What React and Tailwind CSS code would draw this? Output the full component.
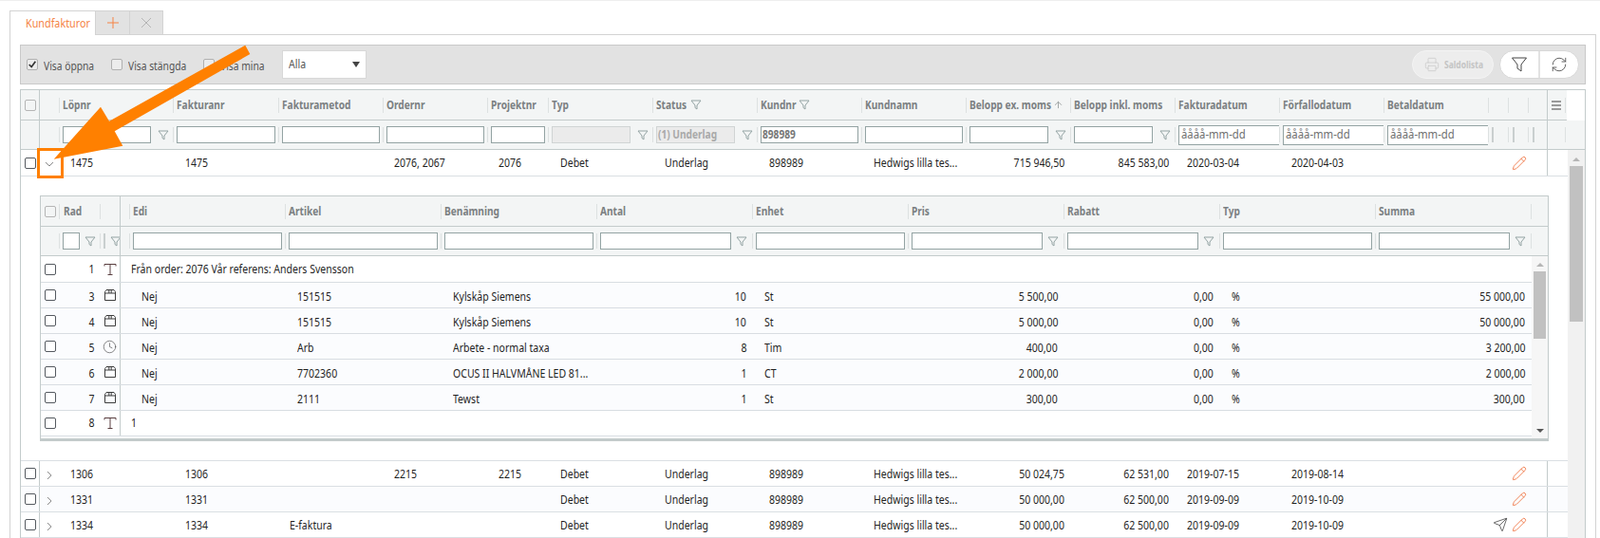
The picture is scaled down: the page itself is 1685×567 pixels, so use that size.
import { Clock, Pencil, Printer, RefreshCw, Send, ArrowUp } from "lucide-react";

const mainCols = [
  { label: "Löpnr", w: "w-[120px]", funnel: true, pad: "pl-[12px]" },
  { label: "Fakturanr", w: "w-[111px]", pad: "pl-[13px]" },
  { label: "Fakturametod", w: "w-[110px]", pad: "pl-[12px]" },
  { label: "Ordernr", w: "w-[110px]", pad: "pl-[12px]" },
  { label: "Projektnr", w: "w-[64px]", pad: "pl-[12px]" },
  { label: "Typ", w: "w-[110px]", funnel: true, disabled: true, pad: "pl-[13px]" },
  { label: "Status", w: "w-[110px]", funnel: true, disabled: true, value: "(1) Underlag", headFunnel: true, labelW: "w-[31px]", pad: "pl-[13px]" },
  { label: "Kundnr", w: "w-[110px]", value: "898989", headFunnel: true, labelW: "w-[35px]", pad: "pl-[13px]" },
  { label: "Kundnamn", w: "w-[110px]", pad: "pl-[13px]" },
  { label: "Belopp ex. moms", w: "w-[110px]", funnel: true, sort: true, labelW: "w-[83px]", right: true },
  { label: "Belopp inkl. moms", w: "w-[110px]", funnel: true, right: true },
  { label: "Fakturadatum", w: "w-[110px]", date: true, pad: "pl-[13px]" },
  { label: "Förfallodatum", w: "w-[110px]", date: true, pad: "pl-[13px]" },
  { label: "Betaldatum", w: "w-[110px]", date: true, pad: "pl-[13px]" },
];

const firstRow = ["1475", "1475", "", "2076, 2067", "2076", "Debet", "Underlag", "898989", "Hedwigs lilla tes...", "715 946,50", "845 583,00", "2020-03-04", "2020-04-03", ""];

const lowerRows = [
  { cells: ["1306", "1306", "", "2215", "2215", "Debet", "Underlag", "898989", "Hedwigs lilla tes...", "50 024,75", "62 531,00", "2019-07-15", "2019-08-14", ""] },
  { cells: ["1331", "1331", "", "", "", "Debet", "Underlag", "898989", "Hedwigs lilla tes...", "50 000,00", "62 500,00", "2019-09-09", "2019-10-09", ""], tint: true },
  { cells: ["1334", "1334", "E-faktura", "", "", "Debet", "Underlag", "898989", "Hedwigs lilla tes...", "50 000,00", "62 500,00", "2019-09-09", "2019-10-09", ""], send: true },
];

const subCols = [
  { label: "Edi" },
  { label: "Artikel" },
  { label: "Benämning" },
  { label: "Antal", funnel: true },
  { label: "Enhet" },
  { label: "Pris", funnel: true },
  { label: "Rabatt", funnel: true },
  { label: "Typ" },
  { label: "Summa", funnel: true },
];

const subRows = [
  { nr: 1, icon: "text", text: "Från order: 2076 Vår referens: Anders Svensson", first: true },
  { nr: 3, icon: "box", cells: ["Nej", "151515", "Kylskåp Siemens", "10", "St", "5 500,00", "0,00", "%", "55 000,00"] },
  { nr: 4, icon: "box", cells: ["Nej", "151515", "Kylskåp Siemens", "10", "St", "5 000,00", "0,00", "%", "50 000,00"] },
  { nr: 5, icon: "clock", cells: ["Nej", "Arb", "Arbete - normal taxa", "8", "Tim", "400,00", "0,00", "%", "3 200,00"] },
  { nr: 6, icon: "box", cells: ["Nej", "7702360", "OCUS II HALVMÅNE LED 81...", "1", "CT", "2 000,00", "0,00", "%", "2 000,00"] },
  { nr: 7, icon: "box", cells: ["Nej", "2111", "Tewst", "1", "St", "300,00", "0,00", "%", "300,00"] },
  { nr: 8, icon: "text", text: "1" },
];

// the app's font is a condensed face, none is installed so Liberation Sans gets squeezed
function Narrow({ children, right, scale = "scale-x-[0.81]", className = "" }) {
  return (
    <span className={`inline-block whitespace-nowrap ${scale} ${right ? "origin-right" : "origin-left"} ${className}`}>
      {children}
    </span>
  );
}

function Funnel({ className = "" }) {
  return (
    <svg viewBox="0 0 12 11" className={`w-[12px] h-[11px] ${className}`} fill="none" stroke="#93a3a3" strokeWidth="1">
      <path d="M1 1h10L7 6v4L5 8.5V6z" />
    </svg>
  );
}

function TextIcon() {
  return (
    <svg viewBox="0 0 14 14" className="w-[14px] h-[14px]" fill="none" stroke="#5a3f40" strokeWidth="1">
      <path d="M1 3.5V1.5h12v2M7 1.5V12.5M4.5 12.5h5" />
    </svg>
  );
}

function BoxIcon() {
  return (
    <svg viewBox="0 0 14 14" className="w-[14px] h-[14px]" fill="none" stroke="#3e3e3e" strokeWidth="1">
      <path d="M1.5 3.5 3 1.5h8l1.5 2v9h-11zM1.5 5h11M5.8 1.5V5M8.2 1.5V5" />
    </svg>
  );
}

function Box({ tone = "row" }) {
  const tones = {
    row: "border-[#555a60] bg-white",
    head: "border-[#b5b5b5] bg-transparent",
    bar: "border-[#b0b0b0] bg-[#ececec]",
  };
  return <span className={`block w-[12px] h-[12px] rounded-[2px] border ${tones[tone]}`} />;
}

function Sep() {
  return <span className="block w-px h-[16px] bg-[#dde1e1] shrink-0" />;
}

function Field({ value, disabled, className = "" }) {
  return (
    <div
      className={`min-w-0 h-[18px] border px-[1px] flex items-center overflow-hidden text-[13px] font-bold ${
        disabled ? "border-[#d0d4d4] bg-[#ebebeb] text-[#a9a9a9]" : "border-[#93a3a3] bg-white text-[#777]"
      } ${className}`}
    >
      {value ? <Narrow scale="scale-x-[0.78]">{value}</Narrow> : null}
    </div>
  );
}

function DateField() {
  return (
    <div className="flex-1 min-w-0 h-[21px] border border-[#93a3a3] border-r-0 bg-white pl-[2px] flex items-center overflow-hidden text-[13px] text-[#6f6f6f]">
      <Narrow scale="scale-x-[0.87]">åååå-mm-dd</Narrow>
    </div>
  );
}

function MainHeader() {
  return (
    <div className="flex h-[32px] bg-[#f3f5f5] border-b border-[#c3cbcb] w-[1628px] items-center">
      <div className="w-[20px] h-full border-r border-[#c3cbcb] flex items-center justify-center shrink-0">
        <Box tone="head" />
      </div>
      <div className="w-[20px] shrink-0" />
      {mainCols.map((c) => (
        <div key={c.label} className={`${c.w} shrink-0 flex items-center gap-[3px] font-bold text-[13px] text-[#7b8082]`}>
          <Sep />
          <span className={`block shrink-0 ${c.labelW || ""}`}>
            <Narrow scale="scale-x-[0.78]">{c.label}</Narrow>
          </span>
          {c.headFunnel ? <Funnel className="ml-[2px]" /> : null}
          {c.sort ? <ArrowUp className="w-[11px] h-[11px] ml-[2px] text-[#9aa0a0]" /> : null}
        </div>
      ))}
      <div className="w-[21px] shrink-0"><Sep /></div>
      <div className="w-[21px] shrink-0"><Sep /></div>
      <div className="w-[20px] shrink-0"><Sep /></div>
      <div className="w-[20px] h-[32px] shrink-0 border-l border-[#c3cbcb] flex items-center justify-between pl-[4px]">
        <span className="flex flex-col gap-[2px] w-[10px]">
          <span className="block h-[2px] bg-[#9a9a9a]" />
          <span className="block h-[2px] bg-[#9a9a9a]" />
          <span className="block h-[2px] bg-[#9a9a9a]" />
        </span>
        <Sep />
      </div>
    </div>
  );
}

function MainFilter() {
  return (
    <div className="flex h-[31px] bg-[#f3f5f5] border-b border-[#c3cbcb] items-center">
      <div className="w-[20px] h-full border-r border-[#c3cbcb] shrink-0" />
      <div className="w-[20px] shrink-0" />
      {mainCols.map((c) => (
        <div key={c.label} className={`${c.w} shrink-0 flex items-center`}>
          <Sep />
          {c.date ? (
            <span className="flex flex-1 min-w-0 pl-[3px]"><DateField /></span>
          ) : (
            <span className="flex flex-1 min-w-0 items-center pl-[3px] pr-[3px]">
              <Field value={c.value} disabled={c.disabled} className="flex-1" />
              {c.funnel ? <span className="w-[20px] shrink-0 flex justify-end pr-[1px]"><Funnel /></span> : null}
            </span>
          )}
        </div>
      ))}
      <div className="w-[21px] shrink-0 flex gap-[3px] items-center"><Sep /><span className="block w-[2px] h-[16px] bg-[#c9cfcf]" /></div>
      <div className="w-[21px] shrink-0 flex gap-[4px] items-center"><Sep /><span className="block w-[2px] h-[16px] bg-[#c9cfcf]" /></div>
      <div className="w-[20px] shrink-0 flex gap-[4px] items-center"><Sep /><span className="block w-[2px] h-[16px] bg-[#c9cfcf]" /></div>
      <div className="w-[20px] h-[31px] shrink-0 border-l border-[#c3cbcb] flex items-center justify-end"><Sep /></div>
    </div>
  );
}

function InvoiceRow({ cells, open, tint, send }) {
  return (
    <div className={`flex items-center border-b border-[#dadfe3] text-[13px] text-[#1f1f1f] ${open ? "h-[28px]" : "h-[27px]"} ${tint ? "bg-[#fbfcfe]" : "bg-white"}`}>
      <div className="w-[20px] h-full border-r border-[#c3cbcb] flex items-center justify-center shrink-0">
        <Box />
      </div>
      <div className="w-[20px] shrink-0 flex justify-center">
        <svg viewBox="0 0 10 10" className="w-[10px] h-[10px] mt-[3px]" fill="none" stroke="#8b8b8b" strokeWidth="1">
          <path d={open ? "M1 3l4 4 4-4" : "M3 1l4 4-4 4"} />
        </svg>
      </div>
      {mainCols.map((c, i) => (
        <div key={c.label} className={`${c.w} shrink-0 ${open ? "" : "pt-[2px]"} ${c.right ? "text-right pr-[6px]" : c.pad}`}>
          {cells[i] ? <Narrow right={c.right}>{cells[i]}</Narrow> : null}
        </div>
      ))}
      <div className="w-[62px] shrink-0 flex items-center justify-end gap-[4px] pr-[21px] pl-[1px]">
        {send ? <Send className="w-[16px] h-[16px] text-[#333]" strokeWidth={1.1} /> : null}
        <Pencil className="w-[16px] h-[16px] text-[#f07c4c]" strokeWidth={1.4} />
      </div>
      <div className="h-full w-px bg-[#c3cbcb] shrink-0" />
    </div>
  );
}

function SubHeader() {
  return (
    <>
      <div className="flex h-[31px] bg-[#f3f5f5] items-center">
        <div className="w-[19px] flex justify-center shrink-0"><Box tone="head" /></div>
        <div className="w-[43px] flex items-center gap-[4px] shrink-0 font-bold text-[13px] text-[#7b8082]">
          <Sep />
          <Narrow scale="scale-x-[0.78]">Rad</Narrow>
        </div>
        <div className="w-[22px] h-full flex items-center shrink-0 border-r border-[#c3cbcb]"><Sep /></div>
        <div className="w-[9px] shrink-0" />
        {subCols.map((c) => (
          <div key={c.label} className="w-[164px] shrink-0 flex items-center gap-[3px] font-bold text-[13px] text-[#7b8082]">
            <Sep />
            <Narrow scale="scale-x-[0.78]">{c.label}</Narrow>
          </div>
        ))}
        <Sep />
      </div>
      <div className="flex h-[32px] bg-[#f3f5f5] border-y border-[#c3cbcb] items-center">
        <div className="w-[19px] shrink-0" />
        <div className="w-[43px] flex items-center shrink-0">
          <Sep />
          <span className="block w-[18px] h-[18px] border border-[#93a3a3] bg-white ml-[3px]" />
          <Funnel className="ml-[5px]" />
        </div>
        <div className="w-[22px] h-full flex items-center shrink-0 border-r border-[#c3cbcb] overflow-hidden">
          <Sep />
          <span className="block w-[2px] h-[16px] bg-[#c9cfcf] ml-[3px] shrink-0" />
          <Funnel className="ml-[5px] shrink-0" />
        </div>
        <div className="w-[9px] shrink-0" />
        {subCols.map((c) => (
          <div key={c.label} className="w-[164px] shrink-0 flex items-center">
            <Sep />
            <span className="flex flex-1 min-w-0 items-center pl-[3px] pr-[3px]">
              <Field className="flex-1" />
              {c.funnel ? <span className="w-[19px] shrink-0 flex justify-end pr-[2px]"><Funnel /></span> : null}
            </span>
          </div>
        ))}
        <Sep />
      </div>
    </>
  );
}

function SubRow({ row }) {
  const rightAligned = [3, 5, 6, 8];
  const nudge = row.cells ? "pt-[3px]" : "";
  return (
    <div className={`flex items-center border-b border-[#d8dde2] text-[13px] text-[#1f1f1f] ${row.first ? "h-[28px]" : "h-[27px]"} ${row.cells ? "bg-[#fbfcfe]" : "bg-white"}`}>
      <div className="w-[19px] flex justify-center shrink-0"><Box /></div>
      <div className={`w-[37px] text-right shrink-0 ${nudge}`}><Narrow right>{row.nr}</Narrow></div>
      <div className="w-[28px] h-full flex items-center justify-end pr-[3px] shrink-0 border-r border-[#c3cbcb]">
        {row.icon === "text" ? <TextIcon /> : null}
        {row.icon === "box" ? <BoxIcon /> : null}
        {row.icon === "clock" ? <Clock className="w-[15px] h-[15px] text-[#444]" strokeWidth={1} /> : null}
      </div>
      {row.text ? (
        <div className="pl-[11px]"><Narrow>{row.text}</Narrow></div>
      ) : (
        <>
          <div className="w-[9px] shrink-0" />
          {row.cells.map((v, i) => {
            const right = rightAligned.includes(i);
            return (
              <div key={i} className={`w-[164px] shrink-0 ${nudge} ${right ? "text-right pr-[6px]" : "pl-[13px]"}`}>
                <Narrow right={right}>{v}</Narrow>
              </div>
            );
          })}
        </>
      )}
    </div>
  );
}

function SubTable() {
  return (
    <div className="ml-[20px] w-[1589px] h-[259px] border border-[#c3cbcb] border-b-[3px] bg-white overflow-hidden">
      <SubHeader />
      <div className="flex">
        <div className="w-[1570px] shrink-0">
          {subRows.map((r) => (
            <SubRow key={r.nr} row={r} />
          ))}
        </div>
        <div className="flex-1 bg-[#f6f6f6] h-[192px] flex flex-col items-center pt-[7px]">
          <span className="w-0 h-0 border-x-[4px] border-x-transparent border-b-[4px] border-b-[#b5b5b5]" />
          <span className="w-[13px] h-[71px] bg-[#c1c1c1] mt-[5px]" />
          <span className="w-0 h-0 border-x-[4px] border-x-transparent border-t-[4px] border-t-[#555] mt-[95px]" />
        </div>
      </div>
    </div>
  );
}

export default function App() {
  return (
    <div className="relative w-[1685px] h-[567px] overflow-hidden bg-white border-t border-[#eeeeee] [font-family:'Liberation_Sans',Arial,sans-serif]">
      <div className="flex pl-[10px] pt-[10px] h-[36px] pr-[4px]">
        <div className="w-[91px] h-[26px] border border-b-0 border-[#d3d3d3] bg-white flex items-center pl-[16px] text-[13px] text-[#f58345]">
          <Narrow scale="scale-x-[0.83]">Kundfakturor</Narrow>
        </div>
        <div className="w-[36px] h-[26px] bg-[#e2e2e2] border border-l-0 border-[#d3d3d3] flex items-center justify-center">
          <svg viewBox="0 0 12 12" className="w-[12px] h-[12px]" stroke="#f58345" strokeWidth="1">
            <path d="M6 0v12M0 6h12" />
          </svg>
        </div>
        <div className="w-[35px] h-[26px] bg-[#e2e2e2] border border-l-0 border-[#d3d3d3] flex items-center justify-center">
          <svg viewBox="0 0 10 10" className="w-[10px] h-[10px]" stroke="#b4b4b4" strokeWidth="1">
            <path d="M0 0l10 10M10 0L0 10" />
          </svg>
        </div>
        <div className="flex-1 border-b border-[#d3d3d3] h-[26px]" />
      </div>

      <div className="ml-[10px] mr-[4px] h-[530px] border-x border-[#d3d3d3] pt-[10px] px-[10px]">
        <div className="h-[42px] bg-[#e2e2e2] border border-[#c9c9c9] flex items-center pl-[6px] pr-[6px] text-[13px] text-[#555]">
          <label className="flex items-center gap-[6px] w-[89px]">
            <span className="relative">
              <Box tone="bar" />
              <svg viewBox="0 0 12 12" className="absolute left-[1px] top-[1px] w-[10px] h-[10px]" fill="none" stroke="#333" strokeWidth="2">
                <path d="M2 6l3 3 5-7" />
              </svg>
            </span>
            <Narrow scale="scale-x-[0.79]" className="mt-[4px]">Visa öppna</Narrow>
          </label>
          <label className="flex items-center gap-[6px] w-[97px]"><Box tone="bar" /><Narrow scale="scale-x-[0.79]" className="mt-[4px]">Visa stängda</Narrow></label>
          <label className="flex items-center gap-[6px] w-[83px]"><Box tone="bar" /><Narrow scale="scale-x-[0.79]" className="mt-[4px]">Visa mina</Narrow></label>
          <div className="w-[89px] h-[30px] bg-white border border-[#d8d8d8] flex items-center justify-between pl-[6px] pr-[6px] text-[#555]">
            <Narrow>Alla</Narrow>
            <span className="w-0 h-0 border-x-[4px] border-x-transparent border-t-[6px] border-t-[#444]" />
          </div>
          <div className="ml-auto flex items-center gap-[6px]">
            <div className="w-[86px] h-[30px] rounded-full border border-[#f4f4f4] bg-[#ededed] flex items-center pl-[12px] gap-[5px] text-[10px] font-bold text-[#c4c4c4]">
              <Printer className="w-[16px] h-[16px] text-[#c4c4c4] shrink-0" strokeWidth={1} />
              <Narrow scale="scale-x-[0.85]">Saldolista</Narrow>
            </div>
            <div className="w-[84px] h-[30px] rounded-full bg-white border border-[#d8d8d8] flex overflow-hidden">
              <div className="w-[42px] flex items-center justify-center border-r-2 border-[#e2e2e2]">
                <svg viewBox="0 0 18 18" className="w-[18px] h-[18px]" fill="none" stroke="#444" strokeWidth="1">
                  <path d="M1.5 2h15L11 9v7l-4-3V9z" />
                </svg>
              </div>
              <div className="flex-1 flex items-center justify-center">
                <RefreshCw className="w-[18px] h-[18px] text-[#444]" strokeWidth={1.1} />
              </div>
            </div>
          </div>
        </div>

        <div className="mt-[5px] border-x border-t border-[#c3cbcb] h-[473px]">
          <MainHeader />
          <MainFilter />
          <div className="flex">
            <div className="w-[1629px] shrink-0">
              <InvoiceRow cells={firstRow} open />
              <div className="h-[300px] pt-[20px] border-b border-[#dadfe3] bg-white">
                <SubTable />
              </div>
              {lowerRows.map((r) => (
                <InvoiceRow key={r.cells[0]} cells={r.cells} tint={r.tint} send={r.send} />
              ))}
            </div>
            <div className="flex-1 h-[410px] bg-[#f1f1f1] flex flex-col items-center pt-[8px]">
              <span className="w-0 h-0 border-x-[4px] border-x-transparent border-b-[4px] border-b-[#b5b5b5]" />
              <span className="w-[14px] h-[164px] bg-[#c1c1c1] mt-[5px]" />
            </div>
          </div>
        </div>
      </div>

      <div className="absolute left-[39px] top-[155px] w-[28px] h-[32px] border-[3px] border-[#ff8000]" />
      <svg className="absolute left-0 top-0 w-[300px] h-[200px]" viewBox="0 0 300 200">
        <polygon fill="#ff8000" points="258.3,46.7 263.3,56 120.7,137.3 129.3,152.7 56.7,166.7 106,111.7 115,126.7" />
      </svg>
    </div>
  );
}
